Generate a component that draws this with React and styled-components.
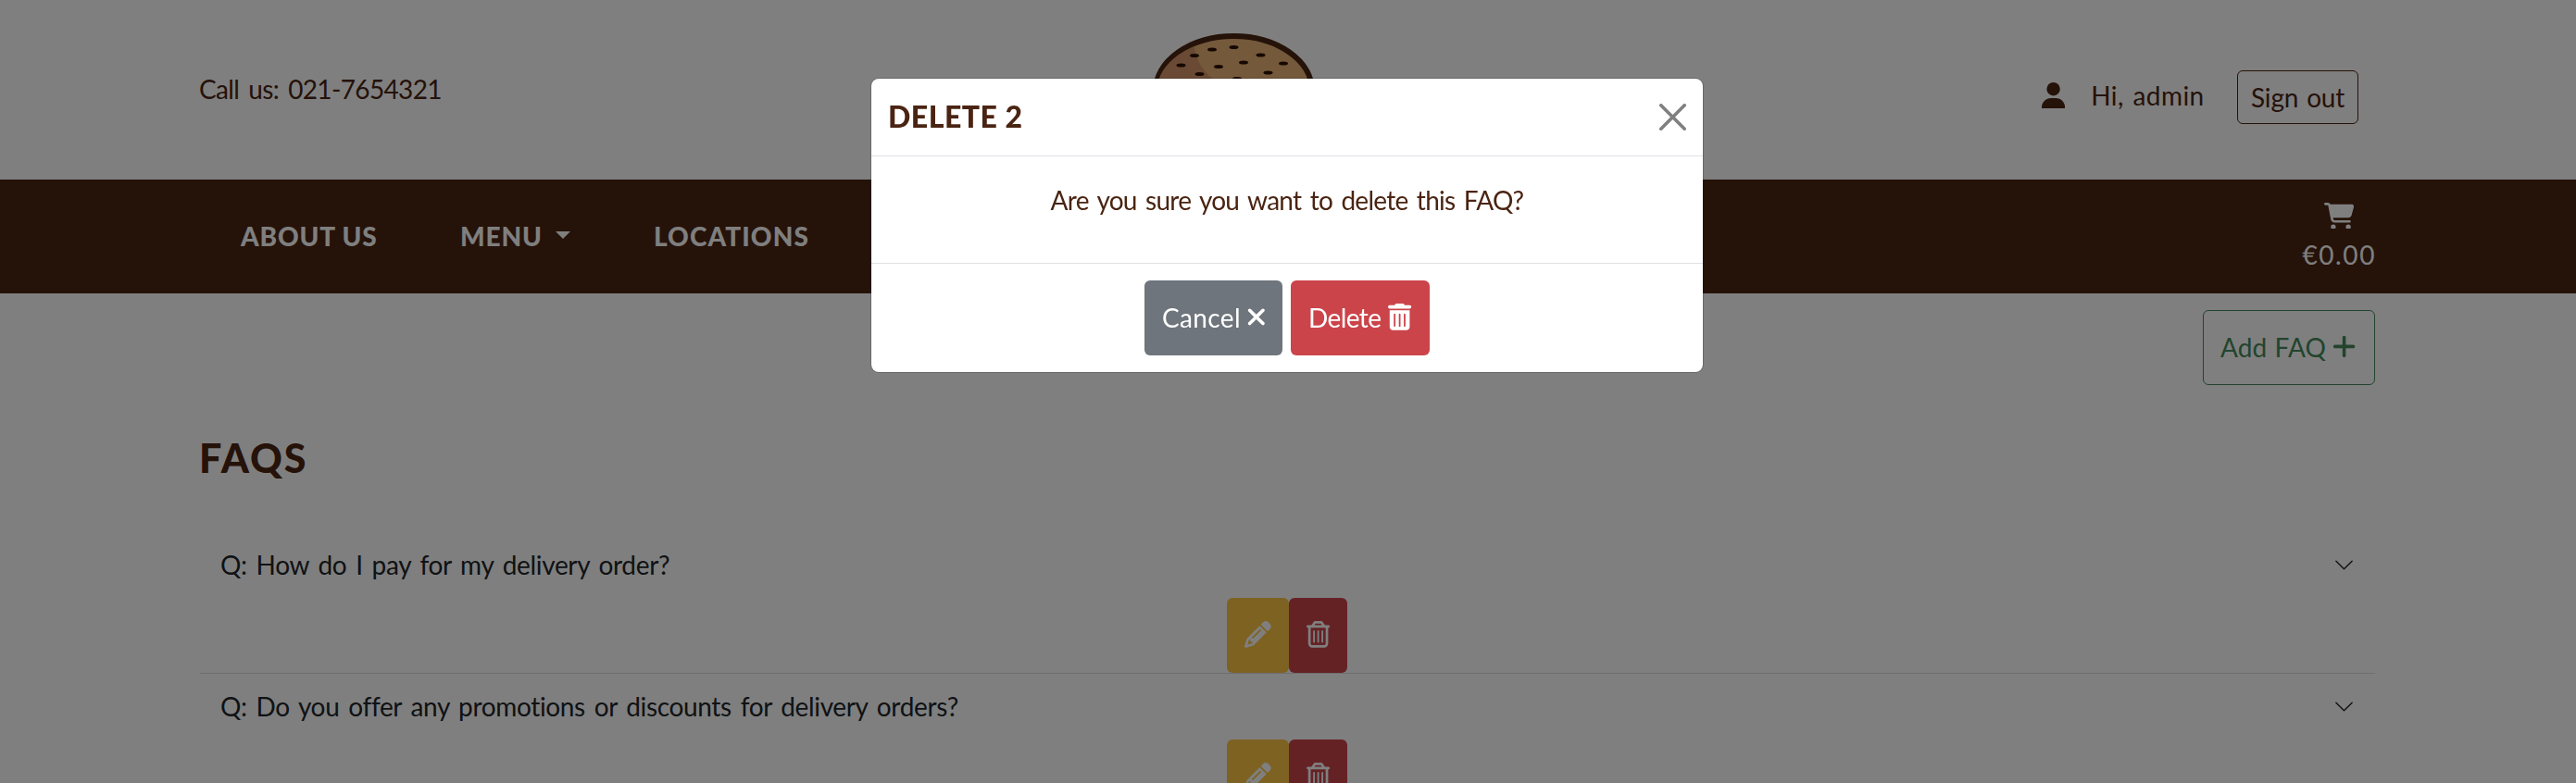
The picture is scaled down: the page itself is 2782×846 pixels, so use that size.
import React from "react";
import styled, { createGlobalStyle, css } from "styled-components";
import {
  FaUser,
  FaCartShopping,
  FaXmark,
  FaPlus,
  FaPencil,
  FaTrashCan,
  FaRegTrashCan,
} from "react-icons/fa6";

const brown = "#4a2412";

const GlobalStyle = createGlobalStyle`
  * { box-sizing: border-box; }
  body {
    margin: 0;
    overflow: hidden;
    background: #fff;
    color: ${brown};
    font-family: Lato, "Liberation Sans", sans-serif;
    font-size: 28px;
    line-height: 34px;
  }
  svg { display: block; flex: none; }
`;

const Label = styled.span`
  white-space: nowrap;
  letter-spacing: ${(p) => p.$track || 0}px;
  word-spacing: ${(p) => p.$word || 0}px;
`;

const Icon = styled.span`
  flex: none;
  svg {
    width: ${(p) => 28.8 * p.$ratio}px;
    height: 28.8px;
  }
`;

const Page = styled.div`
  height: 846px;
  overflow: hidden;
`;

const Header = styled.header`
  display: flex;
  align-items: flex-start;
  height: 194px;
  padding: 0 235px 0 215px;
`;

const Phone = styled.div`
  width: 1029px;
  padding-top: 79px;
`;

const Logo = styled.svg`
  margin-top: 34px;
`;

const Account = styled.div`
  display: flex;
  align-items: center;
  margin-left: auto;
  padding-top: 76px;
`;

const Greeting = styled.div`
  display: flex;
  align-items: center;
  gap: 28px;
  width: 211px;
  padding-bottom: 4px;
`;

const button = css`
  display: flex;
  align-items: center;
  font: inherit;
  border: 1px solid transparent;
  border-radius: 6px;
  background: none;
`;

const SignOut = styled.button`
  ${button}
  width: 131px;
  height: 58px;
  padding: 0 0 1px 14px;
  color: ${brown};
  border-color: ${brown};
`;

const Nav = styled.nav`
  display: flex;
  align-items: center;
  height: 123px;
  padding: 0 216px 0 260px;
  color: #fff;
  background: ${brown};
`;

const NavItem = styled.a`
  display: flex;
  align-items: center;
  width: ${(p) => p.$width}px;
  padding-bottom: 2px;
  font-weight: 900;
`;

const Caret = styled.i`
  margin: -2px 0 0 14px;
  border: 8px solid transparent;
  border-top-color: #fff;
  border-bottom: 0;
`;

const Cart = styled.div`
  display: flex;
  flex-direction: column;
  align-items: center;
  gap: 11px;
  margin-left: auto;
`;

const Main = styled.main`
  padding: 18px 217px 0 216px;
`;

const Toolbar = styled.div`
  display: flex;
  justify-content: flex-end;
`;

const AddButton = styled.button`
  ${button}
  gap: 7px;
  width: 186px;
  height: 81px;
  padding: 0 0 2px 18px;
  color: #44895a;
  border-color: #44895a;
`;

const Heading = styled.h1`
  height: 106px;
  margin: 53px 0 0 -1px;
  font-size: 43px;
  line-height: 52px;
  font-weight: 900;
`;

const Faq = styled.section`
  height: 153px;
  border-bottom: 1px solid #dcdcdc;
`;

const Question = styled.div`
  display: flex;
  align-items: center;
  justify-content: space-between;
  height: 71px;
  padding: 0 22px 1px 22px;
  color: #212529;
`;

const FaqActions = styled.div`
  display: flex;
  justify-content: center;
  padding-right: 1px;
`;

const IconButton = styled.button`
  ${button}
  justify-content: center;
  width: ${(p) => p.$width}px;
  height: 81px;
  padding: 0 0 2px;
  color: #fff;
  background: ${(p) => p.$color};
`;

const Backdrop = styled.div`
  position: fixed;
  inset: 0;
  display: flex;
  justify-content: center;
  align-items: flex-start;
  padding: 84px 2px 0 0;
  background: rgba(0, 0, 0, 0.5);
`;

const Dialog = styled.div`
  width: 900px;
  border: 1px solid rgba(0, 0, 0, 0.18);
  border-radius: 9px;
  background: #fff;
  background-clip: padding-box;
`;

const DialogHeader = styled.div`
  display: flex;
  align-items: center;
  justify-content: space-between;
  height: 84px;
  padding: 0 18px;
  border-bottom: 1px solid #dee2e6;
`;

const DialogTitle = styled.h5`
  margin: 0 0 2px;
  font-size: 32px;
  font-weight: 900;
`;

const DialogBody = styled.div`
  height: 115px;
  padding-top: 30px;
  text-align: center;
`;

const DialogFooter = styled.div`
  display: flex;
  justify-content: center;
  gap: 9px;
  height: 118px;
  padding-top: 18px;
  border-top: 1px solid #dee2e6;
`;

const DialogButton = styled.button`
  ${button}
  gap: ${(p) => p.$gap}px;
  width: ${(p) => p.$width}px;
  height: 81px;
  padding: 0 0 2px 18px;
  color: #fff;
  background: ${(p) => p.$color};
`;

const seeds = [
  [31.5, 36.5], [46, 26], [65, 19.5], [88.5, 17], [117.5, 25.5], [142, 34.5],
  [72, 38], [99, 33.5], [51.5, 46], [125.5, 44.5], [92, 51],
];

function BurgerLogo() {
  return (
    <Logo width="176" height="130" viewBox="0 0 176 130">
      <defs>
        <clipPath id="bun">
          <ellipse cx="88.5" cy="64" rx="83" ry="56" />
        </clipPath>
      </defs>
      <ellipse cx="88.5" cy="64" rx="84.5" ry="59" fill="#e8b376" stroke={brown} strokeWidth="6" />
      <path clipPath="url(#bun)" d="M0 0H47C42 22 51 42 72 56V80H0Z" fill="#d49568" />
      {seeds.map(([x, y]) => (
        <ellipse key={x} cx={x} cy={y} rx="5" ry="2.1" fill="#2c1002" />
      ))}
    </Logo>
  );
}

function Chevron() {
  return (
    <svg width="23" height="23" viewBox="0 0 16 16" fill="#212529">
      <path
        fillRule="evenodd"
        d="M1.646 4.646a.5.5 0 0 1 .708 0L8 10.293l5.646-5.647a.5.5 0 0 1 .708.708l-6 6a.5.5 0 0 1-.708 0l-6-6a.5.5 0 0 1 0-.708z"
      />
    </svg>
  );
}

function CloseIcon() {
  return (
    <svg width="29" height="29" viewBox="0 0 16 16" fill="#808080">
      <path d="M.293.293a1 1 0 0 1 1.414 0L8 6.586 14.293.293a1 1 0 1 1 1.414 1.414L9.414 8l6.293 6.293a1 1 0 0 1-1.414 1.414L8 9.414l-6.293 6.293a1 1 0 0 1-1.414-1.414L6.586 8 .293 1.707a1 1 0 0 1 0-1.414z" />
    </svg>
  );
}

const faqs = [
  { text: "Q: How do I pay for my delivery order?", track: -0.33 },
  { text: "Q: Do you offer any promotions or discounts for delivery orders?", track: -0.35 },
];

export default function App() {
  return (
    <Page>
      <GlobalStyle />
      <Header>
        <Phone>
          <Label $track={-0.64} $word={3.5}>Call us: 021-7654321</Label>
        </Phone>
        <BurgerLogo />
        <Account>
          <Greeting>
            <Icon $ratio={0.875}><FaUser /></Icon>
            <Label $track={0.45} $word={2}>Hi, admin</Label>
          </Greeting>
          <SignOut>
            <Label $track={-0.2} $word={2}>Sign out</Label>
          </SignOut>
        </Account>
      </Header>
      <Nav>
        <NavItem $width={237}>
          <Label $track={0.85}>ABOUT US</Label>
        </NavItem>
        <NavItem $width={209}>
          <Label $track={0.9}>MENU</Label>
          <Caret />
        </NavItem>
        <NavItem $width={170}>
          <Label $track={1.1}>LOCATIONS</Label>
        </NavItem>
        <Cart>
          <Icon $ratio={1.125}><FaCartShopping /></Icon>
          <Label $track={1.6}>€0.00</Label>
        </Cart>
      </Nav>
      <Main>
        <Toolbar>
          <AddButton>
            <Label $track={0.1} $word={1}>Add FAQ</Label>
            <Icon $ratio={0.875}><FaPlus /></Icon>
          </AddButton>
        </Toolbar>
        <Heading>
          <Label $track={2}>FAQS</Label>
        </Heading>
        {faqs.map((faq) => (
          <Faq key={faq.text}>
            <Question>
              <Label $track={faq.track} $word={3}>{faq.text}</Label>
              <Chevron />
            </Question>
            <FaqActions>
              <IconButton $width={67} $color="#fcc444">
                <Icon $ratio={1}><FaPencil /></Icon>
              </IconButton>
              <IconButton $width={63} $color="#cb444a">
                <Icon $ratio={0.875}><FaRegTrashCan /></Icon>
              </IconButton>
            </FaqActions>
          </Faq>
        ))}
      </Main>
      <Backdrop>
        <Dialog>
          <DialogHeader>
            <DialogTitle>
              <Label $track={0.5}>DELETE 2</Label>
            </DialogTitle>
            <CloseIcon />
          </DialogHeader>
          <DialogBody>
            <Label $track={-0.75} $word={3}>Are you sure you want to delete this FAQ?</Label>
          </DialogBody>
          <DialogFooter>
            <DialogButton $width={149} $gap={6} $color="#6e757c">
              <Label $track={0.35}>Cancel</Label>
              <Icon $ratio={0.75}><FaXmark /></Icon>
            </DialogButton>
            <DialogButton $width={150} $gap={8} $color="#cb444a">
              <Label $track={-0.6}>Delete</Label>
              <Icon $ratio={0.875}><FaTrashCan /></Icon>
            </DialogButton>
          </DialogFooter>
        </Dialog>
      </Backdrop>
    </Page>
  );
}
